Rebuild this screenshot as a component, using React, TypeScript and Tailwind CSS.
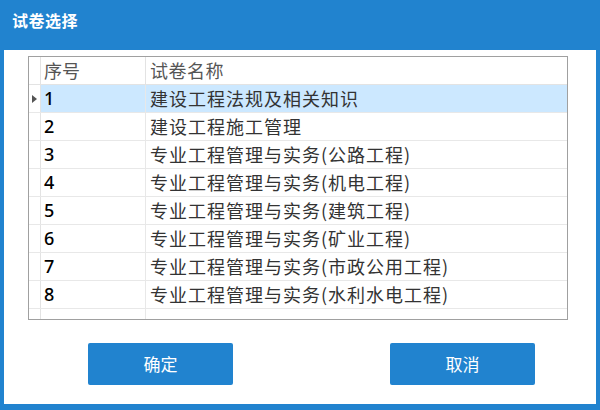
import React from 'react';

interface Paper {
  id: number;
  name: string;
}

const papers: Paper[] = [
  { id: 1, name: '建设工程法规及相关知识' },
  { id: 2, name: '建设工程施工管理' },
  { id: 3, name: '专业工程管理与实务(公路工程)' },
  { id: 4, name: '专业工程管理与实务(机电工程)' },
  { id: 5, name: '专业工程管理与实务(建筑工程)' },
  { id: 6, name: '专业工程管理与实务(矿业工程)' },
  { id: 7, name: '专业工程管理与实务(市政公用工程)' },
  { id: 8, name: '专业工程管理与实务(水利水电工程)' },
];

const cjk = { fontFamily: '"Noto Sans CJK SC", "Liberation Sans", sans-serif' };
const num = { fontFamily: '"Noto Sans", "Liberation Sans", sans-serif' };

const App: React.FC = () => {
  const selected = 1;

  return (
    <div className="w-[600px] h-[410px] bg-[#2183cf] flex flex-col overflow-hidden" style={cjk}>
      {/* Title bar */}
      <div className="h-[50px] shrink-0 px-3 pt-[9px] text-white text-[16px] font-bold leading-[22px] tracking-[0.5px]">
        试卷选择
      </div>

      {/* Body */}
      <div className="mx-1 mb-[6px] flex-1 bg-white flex flex-col">
        {/* Grid */}
        <div className="ml-6 mt-[6px] w-[540px] h-[264px] border border-[#a0a0a0] overflow-hidden">
          {/* Header */}
          <div className="flex h-[28px] border-b border-[#e3e3e3]">
            <div className="w-[12px] border-r border-[#e3e3e3]" />
            <div className="w-[105px] border-r border-[#e3e3e3] pl-[3px] text-[18px] leading-[27px] text-[#555]">序号</div>
            <div className="flex-1 pl-[4px] text-[18px] leading-[27px] tracking-[0.5px] text-[#555]">试卷名称</div>
          </div>

          {papers.map((p) => {
            const active = p.id === selected;
            return (
              <div key={p.id} className="flex h-[28px] border-b border-[#e8e8e8]">
                <div className="w-[12px] border-r border-[#e3e3e3] flex items-center justify-end pr-[3px]">
                  {active && (
                    <svg width="5" height="8" viewBox="0 0 5 8">
                      <path d="M0 0 L5 4 L0 8 Z" fill="#555" />
                    </svg>
                  )}
                </div>
                <div
                  className={`w-[105px] border-r border-[#e8e8e8] pl-[3px] text-[18px] font-medium leading-[27px] text-black ${
                    active ? 'bg-[#cce8ff]' : ''
                  }`}
                  style={num}
                >
                  {p.id}
                </div>
                <div
                  className={`flex-1 pl-[4px] text-[18px] leading-[27px] tracking-[1px] text-[#333] ${
                    active ? 'bg-[#cce8ff]' : ''
                  }`}
                >
                  {p.name}
                </div>
              </div>
            );
          })}

          {/* Empty trailing row */}
          <div className="flex h-[28px]">
            <div className="w-[12px] border-r border-[#e3e3e3]" />
            <div className="w-[105px] border-r border-[#e8e8e8]" />
            <div className="flex-1" />
          </div>
        </div>

        {/* Buttons */}
        <div className="flex mt-[23px] pl-[84px] gap-[157px]">
          <button className="w-[145px] h-[42px] rounded-[2px] bg-[#2183cf] text-white text-[17px]">确定</button>
          <button className="w-[145px] h-[42px] rounded-[2px] bg-[#2183cf] text-white text-[17px]">取消</button>
        </div>
      </div>
    </div>
  );
};

export default App;
